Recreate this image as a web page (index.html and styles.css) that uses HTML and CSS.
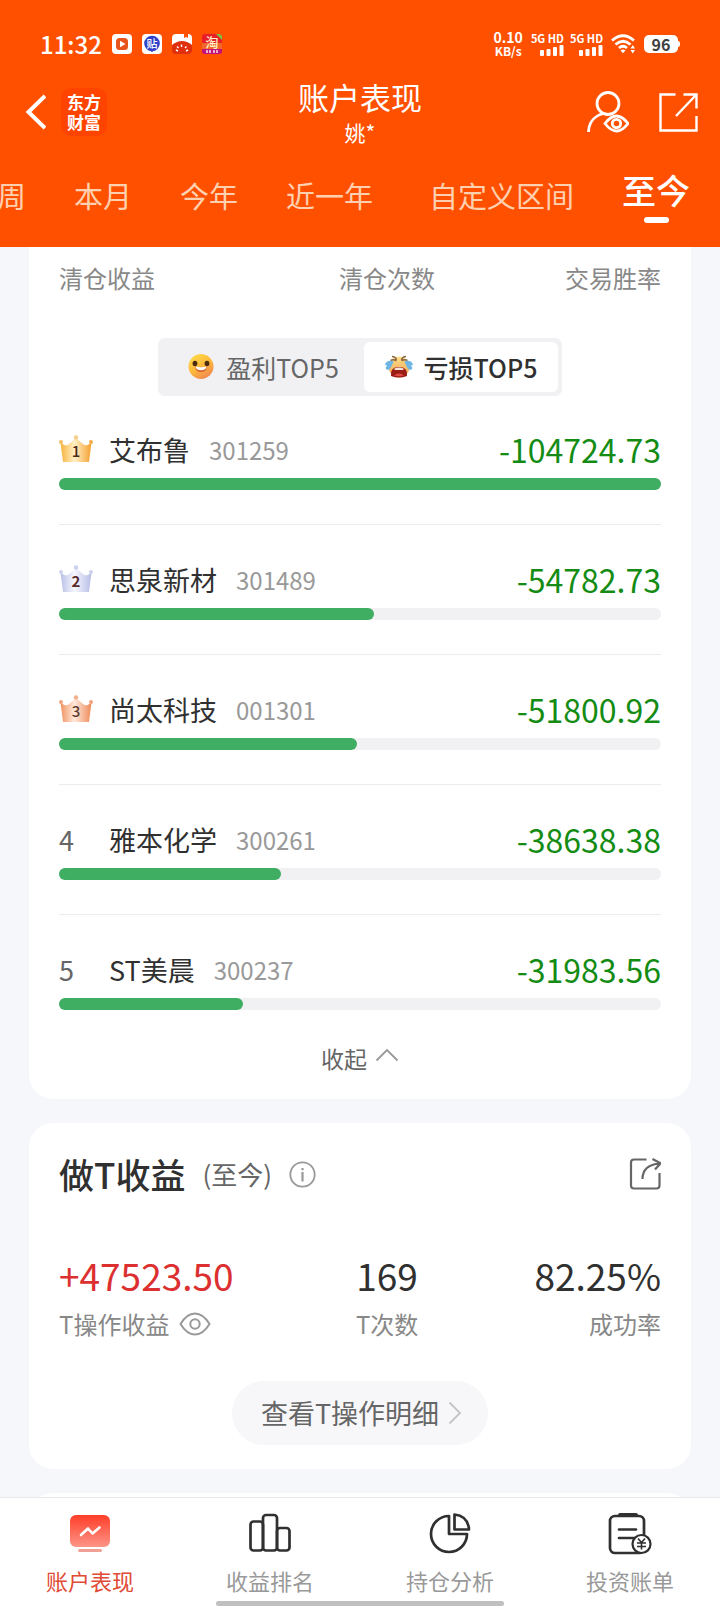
FILE: index.html
```html
<!DOCTYPE html>
<html lang="zh-CN">
<head>
<meta charset="utf-8">
<meta name="viewport" content="width=device-width, initial-scale=1">
<title>账户表现</title>
<link rel="stylesheet" href="styles.css">
</head>
<body>
<div class="app">
  <header class="header">
    <div class="status">
      <div class="status-side">
        <span class="clock">11:32</span>
        <svg class="notice" viewBox="0 0 20 20"><rect width="20" height="20" rx="4" fill="#fff"/><rect x="4" y="4" width="12" height="12" rx="3.500" fill="#e8551c"/><path d="M8 6.700l5.500 3.300L8 13.300z" fill="#fff"/></svg>
        <svg class="notice" viewBox="0 0 20 20"><rect width="20" height="20" rx="4" fill="#fff"/><circle cx="10" cy="9.500" r="7.800" fill="#3341c8"/><path d="M8 16l2 2.200 2-2.200z" fill="#3341c8"/><text class="glyph" x="10" y="13.500" font-size="11" text-anchor="middle" fill="#fff">贴</text></svg>
        <svg class="notice" viewBox="0 0 20 20"><path d="M4 0h8v4l2-1 2 1V0a4 4 0 0 1 4 4v8H0V4a4 4 0 0 1 4-4z" fill="#fff"/><path d="M0 11q10-8 20 0v5a4 4 0 0 1-4 4H4a4 4 0 0 1-4-4z" fill="#df2f0c"/><path d="M4 16l2 1M5 12.500l1.500 1.500M9.500 10.500V13M14.500 12.500L13 14M16 16l-2 1" stroke="#fff" stroke-width="1.400"/></svg>
        <svg class="notice" viewBox="0 0 20 20"><rect width="20" height="20" rx="3" fill="#e91e2b"/><path d="M0 9h20v6H0z" fill="#f1662b"/><path d="M14 0h3a3 3 0 0 1 3 3v3z" fill="#7ec242"/><text class="glyph" x="10" y="13" font-size="13" text-anchor="middle" fill="#fff3c8">淘</text><path d="M0 15h20v2a3 3 0 0 1-3 3H3a3 3 0 0 1-3-3z" fill="#c3137a"/><path d="M5 16v3M8 16v3M12 16v3M15 16v3" stroke="#fff" stroke-width="1.300"/></svg>
      </div>
      <div class="status-side status-right">
        <span class="speed"><b>0.10</b><small>KB/s</small></span>
        <span class="signal">5G HD<svg width="24" height="11" viewBox="0 0 24 11" fill="#fff"><rect y="5" width="4" height="6" rx="1"/><rect x="6.500" y="4" width="4" height="7" rx="1"/><rect x="13" y="2" width="4" height="9" rx="1"/><rect x="19.500" width="4" height="11" rx="1"/></svg></span>
        <span class="signal">5G HD<svg width="24" height="11" viewBox="0 0 24 11" fill="#fff"><rect y="5" width="4" height="6" rx="1"/><rect x="6.500" y="4" width="4" height="7" rx="1"/><rect x="13" y="2" width="4" height="9" rx="1"/><rect x="19.500" width="4" height="11" rx="1"/></svg></span>
        <svg class="wifi" width="25" height="20" viewBox="0 0 25 20"><g fill="none" stroke="#fff" stroke-width="2.800"><path d="M1 6.500q11-9.500 22 0"/><path d="M4.500 10.500q7.500-6.500 15 0"/><path d="M8 14q4-3.500 8 0"/></g><path d="M9.500 16.500q2.500-2 5 0L12 19.300z" fill="#fff"/><path d="M19.500 14.500h4.500l-2.200-3.500zM19.500 16h4.500l-2.200 3.500z" fill="#fff"/></svg>
        <span class="battery">96</span>
      </div>
    </div>
    <div class="titlebar">
      <div class="title-side">
        <button class="icon-btn" type="button" aria-label="返回"><svg width="24" height="36" viewBox="0 0 24 36"><path d="M23 2L6.500 18 23 34" fill="none" stroke="#fff" stroke-width="4"/></svg></button>
        <span class="brand">东方<br>财富</span>
      </div>
      <div class="title-text">
        <h1 class="title">账户表现</h1>
        <span class="subtitle">姚*</span>
      </div>
      <div class="title-side title-actions">
        <button class="icon-btn" type="button" aria-label="查看账户"><svg width="42" height="42" viewBox="0 0 42 42" fill="none" stroke="#fff" stroke-width="2.800"><circle cx="21" cy="12.500" r="11"/><path d="M1.500 41c.5-10 6.500-16.500 15-18.500"/><path d="M18 32.500q11.500-15 23 0q-11.500 15-23 0z"/><circle cx="29.500" cy="32.500" r="4.200"/></svg></button>
        <button class="icon-btn" type="button" aria-label="打开"><svg width="39" height="39" viewBox="0 0 39 39" fill="none" stroke="#fff" stroke-width="2.400"><path d="M16.500 1.500h-15v36h36V23"/><path d="M24.500 1.500h13v14M37 2L17 23"/></svg></button>
      </div>
    </div>
    <nav class="tabs">
      <button class="tab" type="button">本周</button>
      <button class="tab" type="button">本月</button>
      <button class="tab" type="button">今年</button>
      <button class="tab" type="button">近一年</button>
      <button class="tab tab-range" type="button">自定义区间</button>
      <button class="tab tab-active" type="button">至今</button>
    </nav>
  </header>

  <main class="content">
    <section class="card card-ranking">
      <div class="columns label">
        <span>清仓收益</span><span>清仓次数</span><span>交易胜率</span>
      </div>
      <div class="segment">
        <button class="segment-item" type="button">
          <svg width="28" height="26" viewBox="0 0 28 26"><defs><linearGradient id="smile" x2=".6" y2="1"><stop stop-color="#ffe04a"/><stop offset=".6" stop-color="#fdb83c"/><stop offset="1" stop-color="#f08a50"/></linearGradient></defs><circle cx="14" cy="12.500" r="12.500" fill="url(#smile)"/><ellipse cx="8" cy="9.500" rx="2.400" ry="2.700" fill="#4c2c10"/><ellipse cx="20" cy="9.500" rx="2.400" ry="2.700" fill="#4c2c10"/><path d="M8 12.500q6 1.500 12 0-.5 5.500-6 5.500t-6-5.500z" fill="#d9622f"/><path d="M8.500 12.500q5.500 1.500 11 0-.5 3.800-5.500 3.800t-5.500-3.800z" fill="#fff"/></svg>
          盈利TOP5
        </button>
        <button class="segment-item segment-active" type="button">
          <svg width="28" height="26" viewBox="0 0 28 26"><defs><linearGradient id="cry" x2="0" y2="1"><stop stop-color="#ffe08a"/><stop offset="1" stop-color="#f0a050"/></linearGradient></defs><ellipse cx="14" cy="13" rx="10.500" ry="10.500" fill="url(#cry)"/><path d="M7 2.500q3.500 0 4.500 3.500M5.500 6.500q3-1.500 6 .5M21 2.500q-3.500 0-4.500 3.500M22.500 6.500q-3-1.500-6 .5" fill="none" stroke="#8a6440" stroke-width="1.500"/><path d="M8 7Q1 6 0 11l2 .5L.5 14q2 4 5 0l3-6zM20 7q7-1 8 4l-2 .5 1.500 2.500q-2 4-5 0l-3-6z" fill="#6fb6e4"/><path d="M6 22q-1-9 8-9t8 9q-8 3-16 0z" fill="#9a1d16"/><path d="M9.500 14.500q4.500-2 9 0v1.500h-9z" fill="#f5e4dc"/><path d="M9 21.500q5-4 10 0-5 1.500-10 0z" fill="#e24a45"/></svg>
          亏损TOP5
        </button>
      </div>
      <ol class="ranking">
        <li class="rank-row">
          <div class="rank-line">
            <svg class="crown" viewBox="0 0 34 28"><defs><linearGradient id="gold"><stop stop-color="#f7b23c"/><stop offset=".45" stop-color="#fff0c6"/><stop offset="1" stop-color="#f5a02e"/></linearGradient></defs><g fill="url(#gold)"><path d="M1.500 7.500Q7 12 10 9l7-6 7 6q3 3 8.500-1.500L30 27H4z"/></g><circle cx="17" cy="2.500" r="2.200" fill="#f7cf8a"/><circle cx="2" cy="7" r="2" fill="#f5bd62"/><circle cx="32" cy="7" r="2" fill="#f3ac48"/><text class="glyph" x="17" y="22" font-size="15" text-anchor="middle" fill="#4a2a18">1</text></svg>
            <span class="name">艾布鲁</span><span class="code">301259</span><span class="loss">-104724.73</span>
          </div>
          <div class="track"><div class="bar" style="width:100%"></div></div>
        </li>
        <li class="rank-row">
          <div class="rank-line">
            <svg class="crown" viewBox="0 0 34 28"><defs><linearGradient id="silver"><stop stop-color="#b9bfe6"/><stop offset=".45" stop-color="#f6f7ff"/><stop offset="1" stop-color="#b7bde6"/></linearGradient></defs><g fill="url(#silver)"><path d="M1.500 7.500Q7 12 10 9l7-6 7 6q3 3 8.500-1.500L30 27H4z"/></g><circle cx="17" cy="2.500" r="2.200" fill="#ccd2ee"/><circle cx="2" cy="7" r="2" fill="#ccd2ee"/><circle cx="32" cy="7" r="2" fill="#ccd2ee"/><text class="glyph glyph-bold" x="17" y="22" font-size="15" text-anchor="middle" fill="#5a2c28">2</text></svg>
            <span class="name">思泉新材</span><span class="code">301489</span><span class="loss">-54782.73</span>
          </div>
          <div class="track"><div class="bar" style="width:52.3%"></div></div>
        </li>
        <li class="rank-row">
          <div class="rank-line">
            <svg class="crown" viewBox="0 0 34 28"><defs><linearGradient id="bronze"><stop stop-color="#f0935f"/><stop offset=".45" stop-color="#ffe9dc"/><stop offset="1" stop-color="#ee8a58"/></linearGradient></defs><g fill="url(#bronze)"><path d="M1.500 7.500Q7 12 10 9l7-6 7 6q3 3 8.500-1.500L30 27H4z"/></g><circle cx="17" cy="2.500" r="2.200" fill="#f3b08c"/><circle cx="2" cy="7" r="2" fill="#f1a27b"/><circle cx="32" cy="7" r="2" fill="#f1a27b"/><text class="glyph" x="17" y="22" font-size="15" text-anchor="middle" fill="#5a3a30">3</text></svg>
            <span class="name">尚太科技</span><span class="code">001301</span><span class="loss">-51800.92</span>
          </div>
          <div class="track"><div class="bar" style="width:49.5%"></div></div>
        </li>
        <li class="rank-row">
          <div class="rank-line"><span class="place">4</span><span class="name">雅本化学</span><span class="code">300261</span><span class="loss">-38638.38</span></div>
          <div class="track"><div class="bar" style="width:36.9%"></div></div>
        </li>
        <li class="rank-row">
          <div class="rank-line"><span class="place">5</span><span class="name">ST美晨</span><span class="code">300237</span><span class="loss">-31983.56</span></div>
          <div class="track"><div class="bar" style="width:30.5%"></div></div>
        </li>
      </ol>
      <button class="fold" type="button">收起<svg width="24" height="20" viewBox="0 0 24 20"><path d="M1.500 12.500L12 2l10.500 10.500" fill="none" stroke="#999" stroke-width="1.800"/></svg></button>
    </section>

    <section class="card card-t">
      <div class="card-head">
        <h2 class="card-title">做T收益</h2>
        <span class="period">(至今)</span>
        <button class="icon-btn" type="button" aria-label="说明"><svg width="27" height="27" viewBox="0 0 27 27" fill="none" stroke="#999" stroke-width="1.800"><circle cx="13.500" cy="13.500" r="12.200"/><path d="M13.500 11v9.500M13.500 7v2.200" stroke-width="2.200"/></svg></button>
        <button class="icon-btn share" type="button" aria-label="分享"><svg width="32" height="32" viewBox="0 0 32 32" fill="none" stroke="#666" stroke-width="2.200"><path d="M17.500 1.500H5Q2 1.500 2 4.500v23q0 3 3 3h22.500q3 0 3-3V15"/><path d="M13.500 21q0-14 17-15.500M23.500 1l8 4.300-5.500 6.200"/></svg></button>
      </div>
      <div class="columns figures">
        <strong class="figure gain">+47523.50</strong><strong class="figure">169</strong><strong class="figure">82.25%</strong>
      </div>
      <div class="columns label">
        <span class="with-eye">T操作收益<svg width="32" height="24" viewBox="0 0 32 24" fill="none" stroke="#999" stroke-width="2"><path d="M1.500 12C10-2 22-2 30.500 12 22 26 10 26 1.500 12z"/><circle cx="16" cy="12" r="4.700"/></svg></span><span>T次数</span><span>成功率</span>
      </div>
      <button class="detail" type="button">查看T操作明细<svg width="14" height="24" viewBox="0 0 14 24"><path d="M1.500 1.500L12 12 1.500 22.500" fill="none" stroke="#c4c4c8" stroke-width="1.800"/></svg></button>
    </section>
    <section class="card card-next"></section>
  </main>

  <nav class="bottom">
    <a class="bottom-item bottom-active" href="#performance">
      <svg width="44" height="44" viewBox="0 0 44 44"><defs><linearGradient id="screen" x2="0" y2="1"><stop stop-color="#ff3e29"/><stop offset="1" stop-color="#fc9587"/></linearGradient></defs><rect x="2" y="3" width="40" height="32" rx="6" fill="url(#screen)"/><path d="M13 23l7-6.500 4.500 5L31.500 15.500" fill="none" stroke="#fff" stroke-width="2.600" stroke-linecap="round" stroke-linejoin="round"/><rect x="10" y="37" width="24" height="3" rx="1.500" fill="#f0a196"/></svg>
      账户表现</a>
    <a class="bottom-item" href="#rank">
      <svg width="44" height="44" viewBox="0 0 44 44" fill="none" stroke="#303030" stroke-width="2.700"><rect x="2.500" y="9.500" width="12.500" height="29" rx="3"/><rect x="15" y="3" width="14" height="35.500" rx="3"/><rect x="29" y="16" width="12.500" height="22.500" rx="3"/></svg>
      收益排名</a>
    <a class="bottom-item" href="#analysis">
      <svg width="44" height="44" viewBox="0 0 44 44" fill="none" stroke="#303030" stroke-width="2.700" stroke-linejoin="round"><path d="M21 4A18 18 0 1 0 39 22H21z"/><path d="M26.500 2.500Q40 4 41 17.500H26.500z"/></svg>
      持仓分析</a>
    <a class="bottom-item" href="#bills">
      <svg width="44" height="44" viewBox="0 0 44 44" fill="none" stroke="#303030" stroke-width="2.700"><rect x="2" y="4" width="34" height="37" rx="5"/><path d="M12 3h16" stroke-width="4" stroke-linecap="round"/><path d="M11 17.500h17M11 26h15" stroke-linecap="round"/><circle cx="33.500" cy="32" r="9" fill="#fff" stroke-width="2.200"/><path d="M30 26.500l3.500 4 3.500-4M33.500 30.500v7M29 31h9M29 34.500h9" stroke-width="1.600"/></svg>
      投资账单</a>
    <span class="home-bar"></span>
  </nav>
</div>
</body>
</html>
```
FILE: styles.css
```css
* { box-sizing: border-box; }

body {
  margin: 0;
  background: #f6f7fa;
  color: #303030;
  font-family: "Noto Sans CJK SC", "Noto Sans", sans-serif;
}

button {
  padding: 0;
  border: 0;
  background: none;
  color: inherit;
  font: inherit;
  cursor: pointer;
}

svg { display: block; flex: none; }

.glyph { font-family: "Noto Sans CJK SC", sans-serif; font-weight: 500; }
.glyph-bold { font-weight: 700; }

.app {
  display: flex;
  flex-direction: column;
  height: 100vh;
  overflow: hidden;
}

/* Header */
.header {
  flex: none;
  padding-top: 28px;
  background: #ff5000;
  color: #fff;
}

.status {
  display: flex;
  justify-content: space-between;
  height: 32px;
  padding: 0 42px 0 40px;
}

.status-side { display: flex; align-items: center; gap: 10px; }
.status-right { gap: 6px; }
.clock { font-size: 24px; font-weight: 500; line-height: 32px; }
.notice { width: 20px; height: 20px; }

.speed {
  display: flex;
  flex-direction: column;
  align-items: center;
  margin-right: 2px;
  font-size: 14px;
  line-height: 14px;
}
.speed b { font-weight: 700; }
.speed small { font-size: 12px; font-weight: 700; }

.signal {
  display: flex;
  flex-direction: column;
  align-items: flex-end;
  gap: 1px;
  font-size: 11px;
  font-weight: 700;
  line-height: 12px;
}

.wifi { margin-left: 2px; }

.battery {
  position: relative;
  width: 34px;
  height: 18px;
  margin-left: 2px;
  border-radius: 5px;
  background: #fff;
  color: #404040;
  font-size: 16px;
  font-weight: 700;
  line-height: 18px;
  text-align: center;
}
.battery::after {
  content: "";
  position: absolute;
  top: 6px;
  right: -2px;
  width: 2px;
  height: 6px;
  border-radius: 0 2px 2px 0;
  background: #fff;
}

.titlebar {
  display: grid;
  grid-template-columns: 1fr auto 1fr;
  align-items: center;
  height: 104px;
  padding: 0 22px;
}

.title-side { display: flex; align-items: center; gap: 15px; }
.title-actions { justify-content: flex-end; gap: 30px; }
.icon-btn { flex: none; }

.brand {
  padding: 4px 6px;
  border-radius: 10px;
  background: #ff4400;
  font-size: 17px;
  font-weight: 700;
  line-height: 20px;
}

.title-text { display: flex; flex-direction: column; align-items: center; }
.title { margin: 0; font-size: 31px; font-weight: 400; line-height: 40px; }
.subtitle { font-size: 21px; line-height: 30px; }

.tabs {
  display: flex;
  justify-content: flex-end;
  align-items: flex-start;
  gap: 48px;
  height: 83px;
  padding: 6px 30px 0 0;
  overflow: hidden;
}

.tab {
  flex: none;
  padding-top: 3px;
  color: #ffd0b0;
  font-size: 29px;
  line-height: 44px;
}

.tab-range { margin-left: 8px; }

.tab-active {
  display: flex;
  flex-direction: column;
  align-items: center;
  gap: 7px;
  padding-top: 0;
  color: #fff;
  font-size: 34px;
  font-weight: 500;
  line-height: 40px;
}
.tab-active::after {
  content: "";
  width: 25px;
  height: 6px;
  border-radius: 3px;
  background: #fff;
}

/* Cards */
.content {
  display: flex;
  flex: 1;
  flex-direction: column;
  gap: 24px;
  min-height: 0;
  padding: 0 29px;
  overflow: hidden;
}

.card {
  flex: none;
  padding: 0 30px;
  border-radius: 24px;
  background: #fff;
}

.columns {
  display: grid;
  grid-template-columns: 37% 35% 28%;
  align-items: center;
  text-align: center;
}
.columns > :first-child { text-align: left; }
.columns > :last-child { text-align: right; }
.label { color: #888; font-size: 24px; line-height: 32px; }

.card-ranking {
  display: flex;
  flex-direction: column;
  padding-top: 15px;
  border-radius: 0 0 24px 24px;
}

.segment {
  display: flex;
  align-self: center;
  width: 404px;
  margin-top: 44px;
  padding: 4px;
  border-radius: 7px;
  background: #f1f1f4;
}

.segment-item {
  display: flex;
  flex: 1;
  justify-content: center;
  align-items: center;
  gap: 11px;
  height: 50px;
  border-radius: 6px;
  color: #666;
  font-size: 25px;
}
.segment-active {
  flex: 0 0 194px;
  background: #fff;
  color: #303030;
  font-weight: 500;
}

.ranking { margin: 0; padding: 0; list-style: none; }

.rank-row {
  height: 130px;
  padding-top: 33px;
  border-bottom: 1px solid #ececee;
}
.rank-row:first-child { height: 129px; padding-top: 32px; }
.rank-row:last-child { height: 117px; border-bottom: 0; }

.rank-line { display: flex; align-items: center; height: 42px; }
.crown { width: 34px; height: 28px; margin-right: 16px; }
.place { width: 50px; color: #666; font-size: 27px; }
.name { font-size: 27px; }
.code { margin-left: 19px; color: #999; font-size: 24px; }
.loss { margin-left: auto; color: #148c14; font-size: 32px; }

.track {
  height: 12px;
  margin-top: 8px;
  border-radius: 6px;
  background: #f1f1f4;
}
.bar { height: 100%; border-radius: 6px; background: #3fae62; }

.fold {
  display: flex;
  align-self: center;
  align-items: center;
  gap: 8px;
  height: 40px;
  margin: 6px 0 21px;
  color: #666;
  font-size: 23px;
}

.card-t {
  display: flex;
  flex-direction: column;
  padding-top: 26px;
  padding-bottom: 24px;
}

.card-head { display: flex; align-items: center; height: 50px; }
.card-title { margin: 0; font-size: 35px; font-weight: 500; line-height: 48px; }
.period { margin: 0 17px; color: #666; font-size: 26px; line-height: 48px; }
.share { margin-left: auto; }

.figures { margin-top: 51px; line-height: 50px; }
.figure { font-size: 37px; font-weight: 400; }
.gain { color: #dc2f30; }
.figures + .label { padding-top: 8px; }
.with-eye { display: flex; align-items: center; gap: 10px; }

.detail {
  display: flex;
  align-self: center;
  align-items: center;
  gap: 9px;
  height: 64px;
  margin-top: 41px;
  padding: 0 26px 0 29px;
  border-radius: 32px;
  background: #f7f7f9;
  color: #666;
  font-size: 27px;
  line-height: 36px;
}

.card-next { height: 120px; }

/* Bottom navigation */
.bottom {
  position: relative;
  display: grid;
  flex: none;
  grid-template-columns: repeat(4, 1fr);
  height: 111px;
  padding-top: 14px;
  border-top: 1px solid #e8e8ea;
  background: #fff;
}

.bottom-item {
  display: flex;
  flex-direction: column;
  align-items: center;
  gap: 8px;
  color: #999;
  font-size: 22px;
  line-height: 32px;
  text-decoration: none;
}
.bottom-active { color: #df4b35; }

.home-bar {
  position: absolute;
  bottom: 2px;
  left: 30%;
  width: 40%;
  height: 5px;
  border-radius: 3px;
  background: #c0c0c0;
}
```
